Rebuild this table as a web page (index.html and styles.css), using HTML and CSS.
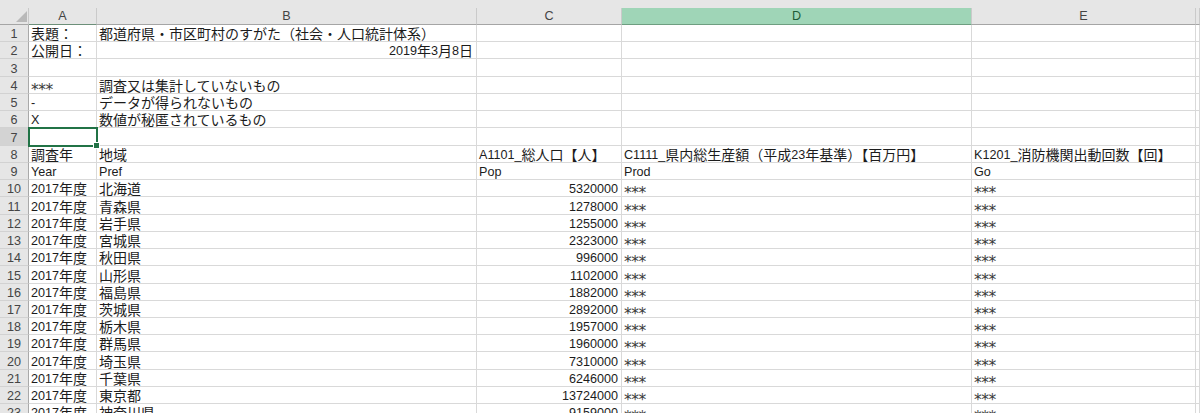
FILE: index.html
```html
<!DOCTYPE html>
<html lang="ja">
<head>
<meta charset="utf-8">
<title>Sheet</title>
<link rel="stylesheet" href="styles.css">
</head>
<body>
<div class="sheet">
  <div class="strip"></div>
  <table class="grid">
    <colgroup>
      <col class="c-rh"><col class="c-a"><col class="c-b"><col class="c-c"><col class="c-d"><col class="c-e"><col class="c-f">
    </colgroup>
    <thead>
      <tr>
        <th class="corner"><svg class="tri" width="28" height="16" viewBox="0 0 28 16"><polygon points="16,14 27,14 27,3" fill="#b9b9b9"/></svg></th>
        <th class="ch ch-a">A</th>
        <th class="ch">B</th>
        <th class="ch">C</th>
        <th class="ch ch-sel">D</th>
        <th class="ch">E</th>
        <th class="ch"></th>
      </tr>
    </thead>
    <tbody>
      <tr><th class="rh">1</th><td><span class="j">表題：</span></td><td><span class="j">都道府県・市区町村のすがた（社会・人口統計体系）</span></td><td></td><td></td><td></td><td></td></tr>
      <tr><th class="rh">2</th><td><span class="j">公開日：</span></td><td class="r">2019<span class="j">年</span>3<span class="j">月</span>8<span class="j">日</span></td><td></td><td></td><td></td><td></td></tr>
      <tr><th class="rh">3</th><td></td><td></td><td></td><td></td><td></td><td></td></tr>
      <tr><th class="rh">4</th><td><span class="ast">***</span></td><td><span class="j">調査又は集計していないもの</span></td><td></td><td></td><td></td><td></td></tr>
      <tr><th class="rh">5</th><td>-</td><td><span class="j">データが得られないもの</span></td><td></td><td></td><td></td><td></td></tr>
      <tr><th class="rh">6</th><td>X</td><td><span class="j">数値が秘匿されているもの</span></td><td></td><td></td><td></td><td></td></tr>
      <tr><th class="rh rh-on">7</th><td class="sel"></td><td></td><td></td><td></td><td></td><td></td></tr>
      <tr><th class="rh">8</th><td><span class="j">調査年</span></td><td><span class="j">地域</span></td><td>A1101_<span class="j">総人口【人】</span></td><td>C1111_<span class="j">県内総生産額（平成</span>23<span class="j">年基準）【百万円】</span></td><td>K1201_<span class="j">消防機関出動回数【回】</span></td><td></td></tr>
      <tr><th class="rh">9</th><td>Year</td><td>Pref</td><td>Pop</td><td>Prod</td><td>Go</td><td></td></tr>
      <tr><th class="rh">10</th><td>2017<span class="j">年度</span></td><td><span class="j">北海道</span></td><td class="r">5320000</td><td><span class="ast">***</span></td><td><span class="ast">***</span></td><td></td></tr>
      <tr><th class="rh">11</th><td>2017<span class="j">年度</span></td><td><span class="j">青森県</span></td><td class="r">1278000</td><td><span class="ast">***</span></td><td><span class="ast">***</span></td><td></td></tr>
      <tr><th class="rh">12</th><td>2017<span class="j">年度</span></td><td><span class="j">岩手県</span></td><td class="r">1255000</td><td><span class="ast">***</span></td><td><span class="ast">***</span></td><td></td></tr>
      <tr><th class="rh">13</th><td>2017<span class="j">年度</span></td><td><span class="j">宮城県</span></td><td class="r">2323000</td><td><span class="ast">***</span></td><td><span class="ast">***</span></td><td></td></tr>
      <tr><th class="rh">14</th><td>2017<span class="j">年度</span></td><td><span class="j">秋田県</span></td><td class="r">996000</td><td><span class="ast">***</span></td><td><span class="ast">***</span></td><td></td></tr>
      <tr><th class="rh">15</th><td>2017<span class="j">年度</span></td><td><span class="j">山形県</span></td><td class="r">1102000</td><td><span class="ast">***</span></td><td><span class="ast">***</span></td><td></td></tr>
      <tr><th class="rh">16</th><td>2017<span class="j">年度</span></td><td><span class="j">福島県</span></td><td class="r">1882000</td><td><span class="ast">***</span></td><td><span class="ast">***</span></td><td></td></tr>
      <tr><th class="rh">17</th><td>2017<span class="j">年度</span></td><td><span class="j">茨城県</span></td><td class="r">2892000</td><td><span class="ast">***</span></td><td><span class="ast">***</span></td><td></td></tr>
      <tr><th class="rh">18</th><td>2017<span class="j">年度</span></td><td><span class="j">栃木県</span></td><td class="r">1957000</td><td><span class="ast">***</span></td><td><span class="ast">***</span></td><td></td></tr>
      <tr><th class="rh">19</th><td>2017<span class="j">年度</span></td><td><span class="j">群馬県</span></td><td class="r">1960000</td><td><span class="ast">***</span></td><td><span class="ast">***</span></td><td></td></tr>
      <tr><th class="rh">20</th><td>2017<span class="j">年度</span></td><td><span class="j">埼玉県</span></td><td class="r">7310000</td><td><span class="ast">***</span></td><td><span class="ast">***</span></td><td></td></tr>
      <tr><th class="rh">21</th><td>2017<span class="j">年度</span></td><td><span class="j">千葉県</span></td><td class="r">6246000</td><td><span class="ast">***</span></td><td><span class="ast">***</span></td><td></td></tr>
      <tr><th class="rh">22</th><td>2017<span class="j">年度</span></td><td><span class="j">東京都</span></td><td class="r">13724000</td><td><span class="ast">***</span></td><td><span class="ast">***</span></td><td></td></tr>
      <tr><th class="rh">23</th><td>2017<span class="j">年度</span></td><td><span class="j">神奈川県</span></td><td class="r">9159000</td><td><span class="ast">***</span></td><td><span class="ast">***</span></td><td></td></tr>
    </tbody>
  </table>
</div>
</body>
</html>
```

FILE: styles.css
```css
html, body {
  margin: 0;
  padding: 0;
  background: #ffffff;
}
body {
  width: 1200px;
  height: 413px;
  overflow: hidden;
}
.sheet {
  width: 1200px;
  height: 413px;
  overflow: hidden;
  font-family: "Liberation Sans", "Noto Sans CJK JP", sans-serif;
  font-size: 12.6px;
  color: #1c1c1c;
}
.strip {
  height: 8px;
  background: #e6e6e6;
}
.grid {
  border-collapse: separate;
  border-spacing: 0;
  table-layout: fixed;
  width: 1200px;
}
.c-rh { width: 29px; }
.c-a { width: 68px; }
.c-b { width: 380px; }
.c-c { width: 145px; }
.c-d { width: 350px; }
.c-e { width: 224px; }
.c-f { width: 4px; }

.grid th, .grid td {
  box-sizing: border-box;
  padding: 0 2px;
  white-space: nowrap;
  font-weight: normal;
}

thead tr { height: 17px; }
.corner {
  background: #e6e6e6;
  border-bottom: 1px solid #a5a5a5;
  border-right: 1px solid #c9c9c9;
  vertical-align: top;
}
.grid .corner { padding: 0; }
.tri { display: block; }
.ch {
  background: #e6e6e6;
  color: #444444;
  text-align: center;
  vertical-align: bottom;
  line-height: 13px;
  border-right: 1px solid #cacaca;
  border-bottom: 1px solid #a5a5a5;
  overflow: hidden;
}
.grid .ch { padding-bottom: 1px; }
.ch-a { border-bottom-color: #6c8f79; }
.ch-sel {
  background: #9fd5b7;
  color: #1e5b36;
  border-bottom-color: #6e9e80;
}

tbody tr { height: 17.24px; }
.rh {
  background: #e6e6e6;
  color: #444444;
  text-align: center;
  vertical-align: bottom;
  line-height: 13px;
  border-right: 1px solid #a9a9a9;
  border-bottom: 1px solid #d2d2d2;
}
.rh-on { background: #d3d3d3; }

.grid td {
  vertical-align: bottom;
  line-height: 13px;
  border-right: 1px solid #d9d9d9;
  border-bottom: 1px solid #d9d9d9;
  text-align: left;
}
.grid td.r {
  text-align: right;
  padding-right: 3px;
}
.j {
  font-family: "Noto Sans CJK JP", sans-serif;
  font-size: 14px;
  line-height: 0;
  vertical-align: -1px;
}
.ast {
  font-family: "DejaVu Sans", sans-serif;
  font-size: 15.5px;
  letter-spacing: -0.5px;
  line-height: 0;
  vertical-align: -5px;
  color: #3a3a3a;
}
.grid td.sel {
  position: relative;
  outline: 2px solid #217346;
  outline-offset: -1px;
}
.grid td.sel::after {
  content: "";
  position: absolute;
  right: -4px;
  bottom: -4px;
  width: 5px;
  height: 5px;
  background: #217346;
  border: 1px solid #ffffff;
}
```
